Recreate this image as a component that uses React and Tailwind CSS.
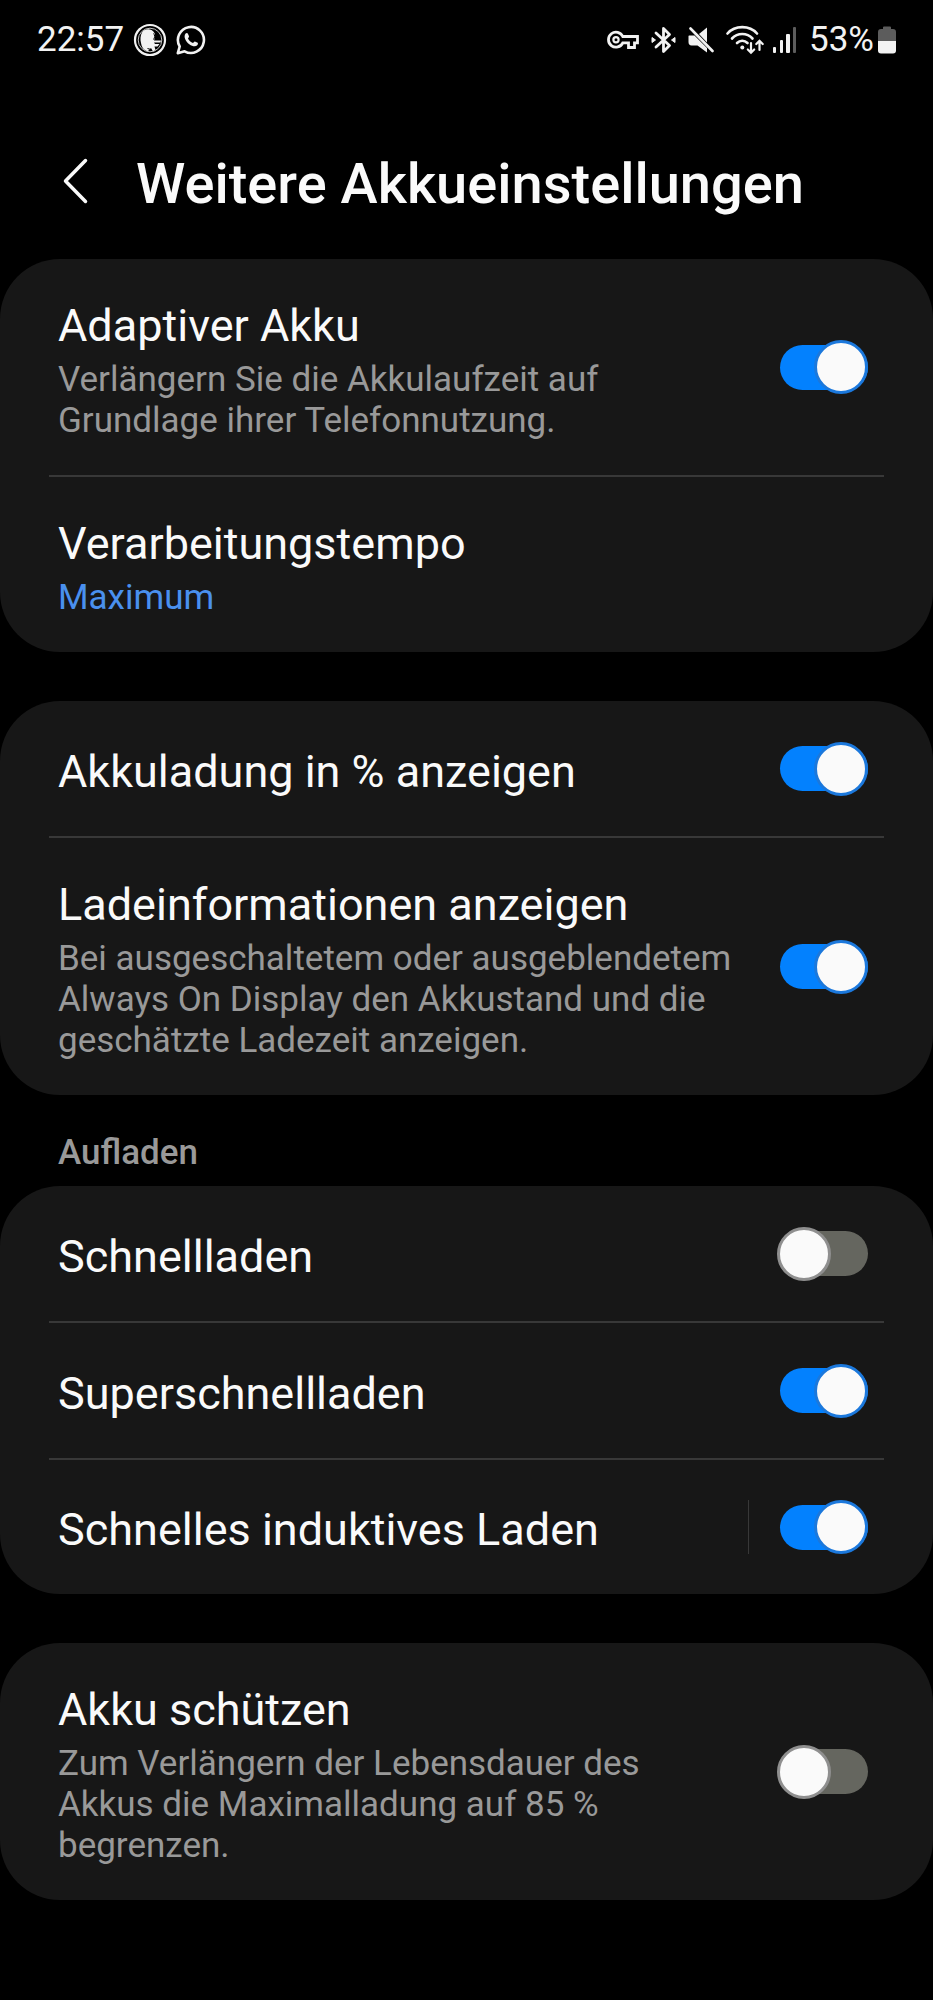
import { useState } from "react";

const cards = [
  {
    rows: [
      {
        id: "adaptive",
        title: "Adaptiver Akku",
        text: "Verlängern Sie die Akkulaufzeit auf Grundlage ihrer Telefonnutzung.",
        toggle: true,
      },
      { id: "speed", title: "Verarbeitungstempo", value: "Maximum" },
    ],
  },
  {
    rows: [
      { id: "percent", title: "Akkuladung in % anzeigen", toggle: true },
      {
        id: "info",
        title: "Ladeinformationen anzeigen",
        text: "Bei ausgeschaltetem oder ausgeblendetem Always On Display den Akkustand und die geschätzte Ladezeit anzeigen.",
        toggle: true,
      },
    ],
  },
  {
    heading: "Aufladen",
    rows: [
      { id: "fast", title: "Schnellladen", toggle: true },
      { id: "superfast", title: "Superschnellladen", toggle: true },
      { id: "wireless", title: "Schnelles induktives Laden", toggle: true, separator: true },
    ],
  },
  {
    rows: [
      {
        id: "protect",
        title: "Akku schützen",
        text: "Zum Verlängern der Lebensdauer des Akkus die Maximalladung auf 85 % begrenzen.",
        toggle: true,
      },
    ],
  },
];

function DuckIcon() {
  return (
    <svg width="34" height="34" viewBox="0 0 34 34" fill="none">
      <circle cx="17" cy="17" r="15" stroke="#f2f2f2" strokeWidth="2.200" />
      <circle cx="17" cy="17" r="11.800" stroke="#c4c4c4" strokeWidth="1" />
      <path
        d="M9 9.500C11 6.500 15 5.500 18.500 7C21.500 8.500 22.500 11.500 22 14.500L21 17.500H28L27.500 19.500H21L22 21H26.500L24.500 23.500H21.500L22.500 27L20 28.500L18 25L14.500 28.500C10.500 27 8.500 24 8 20C7 16.500 7.500 12 9 9.500Z"
        fill="#f2f2f2"
      />
      <path d="M20.500 10.500C22 12 22 14.500 20.500 16.500M14.500 25.500L18 26.500" stroke="#000" strokeWidth="1" />
    </svg>
  );
}

function WhatsappIcon() {
  return (
    <svg width="30" height="30" viewBox="0 0 30 30" fill="none">
      <path
        d="M1.800 28.200L3.700 21.500A13 13 0 1 1 8.600 26.300Z"
        stroke="#f2f2f2"
        strokeWidth="2.600"
        strokeLinejoin="round"
      />
      <path
        d="M9.600 8.400C10.300 7.700 11.300 7.700 11.800 8.500L13 11.200C13.200 11.700 12.200 13 12 13.400C13 15.600 14.700 17.200 17 18C17.500 17.500 18.400 16.300 18.900 16.400L21.700 17.700C22.200 18.100 21.900 19.500 21.200 20.300C19.600 22 16.500 21.600 13.300 19.300C9.800 16.600 7 11.500 9.600 8.400Z"
        fill="#f2f2f2"
      />
    </svg>
  );
}

function KeyIcon() {
  return (
    <svg width="32" height="20" viewBox="0 0 32 20" fill="none" stroke="#f2f2f2" strokeWidth="2.800">
      <path d="M15.800 6.500H30.500V12.800H27.500V17.500H21.500V12.800H15.800A7.500 7.500 0 1 1 15.800 6.500Z" />
      <circle cx="9" cy="9.700" r="2.600" strokeWidth="2.200" />
    </svg>
  );
}

function BluetoothIcon() {
  return (
    <svg width="25" height="28" viewBox="0 0 25 28" fill="none" stroke="#f2f2f2" strokeWidth="2.800">
      <path d="M5 7L18.500 19.500L12.500 25.500V2.500L18.500 8.500L5 21" strokeLinejoin="round" strokeLinecap="round" />
      <path d="M1 11.500L4.500 14L1 16.500ZM24 11.500L20.500 14L24 16.500Z" fill="#f2f2f2" stroke="#f2f2f2" strokeWidth="1" />
    </svg>
  );
}

function MuteIcon() {
  return (
    <svg width="26" height="28" viewBox="0 0 26 28" fill="none">
      <path d="M1 9.500H6.500L19 22V26.500L9.500 19.500H3.500C1.500 19.500 0.500 18 0.500 16V10Z" fill="#f2f2f2" />
      <path d="M11 8L19 1.500V16.500Z" fill="#f2f2f2" />
      <path d="M2.500 2.500L24.500 25" stroke="#f2f2f2" strokeWidth="2.600" strokeLinecap="round" />
    </svg>
  );
}

function WifiIcon() {
  return (
    <svg width="38" height="30" viewBox="0 0 38 30" fill="none" stroke="#f2f2f2" strokeWidth="2.600" strokeLinecap="round">
      <path d="M1.500 8.500C9 0 23.500 0 31 8.500" />
      <path d="M6 13.500C11.500 7.500 21 7.500 26.500 13.500" />
      <path d="M11 18C14 15 18.500 15 21.500 18" />
      <circle cx="16.300" cy="22.500" r="2" fill="#f2f2f2" stroke="none" />
      <path d="M25 18V27.500M21.800 24.500L25 27.700L28.200 24.500" strokeWidth="2.200" />
      <path d="M33.500 25V16M30.300 19L33.500 15.800L36.700 19" strokeWidth="2.200" />
    </svg>
  );
}

function SignalIcon() {
  return (
    <svg width="24" height="26" viewBox="0 0 24 26" fill="#f2f2f2">
      <rect x="0" y="20" width="3" height="6" rx="1" />
      <rect x="7" y="13" width="3" height="13" rx="1" />
      <rect x="13" y="7" width="4" height="19" rx="1" />
      <rect x="20" y="0" width="3" height="26" rx="1" fill="#5c5c5c" />
    </svg>
  );
}

function BatteryIcon() {
  return (
    <svg width="18" height="28" viewBox="0 0 18 28">
      <path d="M5 3V1.500Q5 0.500 6 0.500H12Q13 0.500 13 1.500V3H15Q18 3 18 6V15H0V6Q0 3 3 3Z" fill="#5c5c5c" />
      <path d="M0 15H18V24.500Q18 27.500 15 27.500H3Q0 27.500 0 24.500Z" fill="#f2f2f2" />
    </svg>
  );
}

function StatusBar() {
  return (
    <div className="flex h-20 items-center justify-between px-[37px] text-[35px] leading-[42px] text-[#f2f2f2]">
      <div className="flex items-center gap-[9px]">
        <span>22:57</span>
        <DuckIcon />
        <WhatsappIcon />
      </div>
      <div className="flex items-center gap-3">
        <KeyIcon />
        <BluetoothIcon />
        <MuteIcon />
        <div className="flex items-center gap-[9px]">
          <WifiIcon />
          <SignalIcon />
        </div>
        <div className="flex items-center gap-1">
          <span>53%</span>
          <BatteryIcon />
        </div>
      </div>
    </div>
  );
}

function Switch({ id, checked, onChange }) {
  return (
    <input
      id={id}
      type="checkbox"
      role="switch"
      checked={checked}
      onChange={onChange}
      className="grid h-[54px] w-[91px] shrink-0 cursor-pointer appearance-none items-center before:col-start-1 before:row-start-1 before:h-[45px] before:w-[88px] before:justify-self-end before:rounded-full before:bg-[#65665f] after:col-start-1 after:row-start-1 after:size-[54px] after:justify-self-start after:rounded-full after:border-[3px] after:border-[#8f8f8f] after:bg-[#fafafa] checked:before:bg-[#0381fe] checked:after:justify-self-end checked:after:border-[#1b78dc]"
    />
  );
}

function Row({ row, checked, onToggle }) {
  const Title = row.toggle ? "label" : "span";
  const hasDetail = row.text || row.value;

  return (
    <div className="mx-[49px] flex min-h-[137px] items-center gap-[42px] border-b-2 border-[#383838] pr-4 pl-[9px] last:min-h-[134px] last:border-b-0">
      <div className={`min-w-0 flex-1 ${hasDetail ? "pt-10 pb-[34px]" : "pt-1.5"}`}>
        <Title htmlFor={row.toggle ? row.id : undefined} className="block text-[45px] leading-[54px] text-[#fafafa]">
          {row.title}
        </Title>
        {row.text && <p className="mt-1.5 text-[35px] leading-[41px] text-[#999999]">{row.text}</p>}
        {row.value && (
          <button type="button" className="mt-1.5 block text-[35px] leading-[41px] text-[#4a90ee]">
            {row.value}
          </button>
        )}
      </div>
      {row.toggle && (
        <div className={row.separator ? "border-l border-[#383838] pl-7" : ""}>
          <Switch id={row.id} checked={checked} onChange={onToggle} />
        </div>
      )}
    </div>
  );
}

export default function App() {
  const [settings, setSettings] = useState({
    adaptive: true,
    percent: true,
    info: true,
    fast: false,
    superfast: true,
    wireless: true,
    protect: false,
  });

  const toggle = (id) => setSettings((prev) => ({ ...prev, [id]: !prev[id] }));

  return (
    <div className="min-h-screen bg-black font-[Roboto,sans-serif]">
      <StatusBar />

      <header className="flex items-center gap-[47px] px-[62px] pt-[71px] pb-[42px]">
        <button type="button" aria-label="Zurück">
          <svg width="27" height="52" viewBox="0 0 27 52" fill="none">
            <path
              d="M23.500 2.500L3.500 23L23.500 43.500"
              stroke="#fafafa"
              strokeWidth="3.500"
              strokeLinecap="round"
              strokeLinejoin="round"
            />
          </svg>
        </button>
        <h1 className="text-[56px] leading-[66px] font-medium text-[#fafafa]">Weitere Akkueinstellungen</h1>
      </header>

      <main>
        {cards.map((card, idx) => (
          <section key={idx} className={idx > 0 && !card.heading ? "mt-[49px]" : ""}>
            {card.heading && (
              <h2 className="px-[58px] pt-[37px] pb-[13px] text-[35px] leading-[41px] font-medium text-[#999999]">
                {card.heading}
              </h2>
            )}
            <div className="rounded-[60px] bg-[#171717]">
              {card.rows.map((row) => (
                <Row key={row.id} row={row} checked={settings[row.id]} onToggle={() => toggle(row.id)} />
              ))}
            </div>
          </section>
        ))}
      </main>
    </div>
  );
}
